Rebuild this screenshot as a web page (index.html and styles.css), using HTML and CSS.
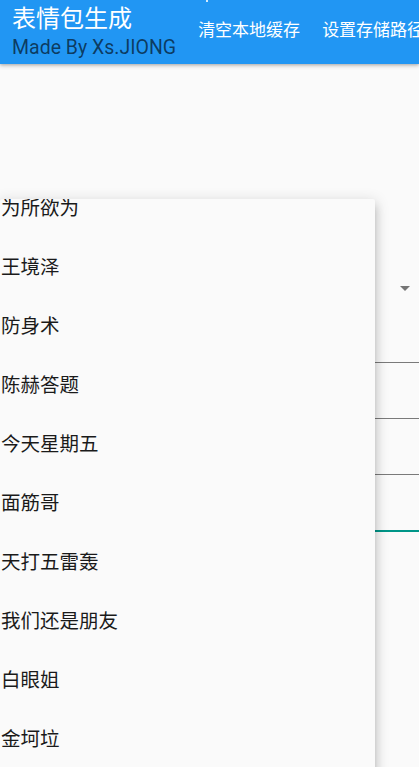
FILE: index.html
```html
<!DOCTYPE html>
<html lang="zh-CN">
<head>
<meta charset="utf-8">
<title>表情包生成</title>
<link rel="stylesheet" href="styles.css">
</head>
<body>
<div class="page">
  <header class="appbar">
    <span class="status-dot"></span>
    <div class="titles">
      <div class="title">表情包生成</div>
      <div class="subtitle">Made By Xs.JIONG</div>
    </div>
    <div class="actions">
      <span class="action">清空本地缓存</span>
      <span class="action">设置存储路径</span>
    </div>
  </header>
  <main class="form">
    <div class="dropdown">
      <svg class="arrow" width="10" height="5" viewBox="0 0 10 5"><path d="M0 0H10L5 5Z" fill="#757575"/></svg>
    </div>
    <div class="field f1"></div>
    <div class="field"></div>
    <div class="field"></div>
    <div class="field focused"></div>
  </main>
  <div class="menu">
    <ul class="menu-list">
      <li>为所欲为</li>
      <li>王境泽</li>
      <li>防身术</li>
      <li>陈赫答题</li>
      <li>今天星期五</li>
      <li>面筋哥</li>
      <li>天打五雷轰</li>
      <li>我们还是朋友</li>
      <li>白眼姐</li>
      <li>金坷垃</li>
      <li>凉凉</li>
    </ul>
  </div>
</div>
</body>
</html>
```
FILE: styles.css
```css
html, body {
  margin: 0;
  padding: 0;
  background: #fafafa;
}
body {
  font-family: Roboto, "Noto Sans CJK SC", sans-serif;
  width: 419px;
  height: 767px;
  overflow: hidden;
}
.page {
  position: relative;
  width: 419px;
  height: 767px;
  overflow: hidden;
  background: #fafafa;
}
.appbar {
  position: relative;
  z-index: 2;
  height: 64px;
  background: #2196f3;
  display: flex;
  align-items: flex-start;
  box-shadow: 0 2px 4px rgba(0,0,0,0.2), 0 1px 2px rgba(0,0,0,0.12);
  white-space: nowrap;
}
.status-dot {
  position: absolute;
  left: 206px;
  top: 0;
  width: 2px;
  height: 2px;
  background: rgba(255,255,255,0.8);
}
.titles {
  padding-left: 12px;
  display: flex;
  flex-direction: column;
  flex: none;
}
.title {
  font-family: "Noto Sans CJK SC", sans-serif;
  color: #fff;
  font-size: 24px;
  line-height: 26px;
  margin-top: 4px;
}
.subtitle {
  font-family: Roboto, sans-serif;
  color: rgba(0,0,0,0.62);
  font-size: 19.5px;
  line-height: 24px;
  margin-top: 6px;
}
.actions {
  display: flex;
  gap: 22px;
  margin-left: 22px;
  margin-top: 18px;
  flex: none;
}
.action {
  font-family: "Noto Sans CJK SC", sans-serif;
  color: #fff;
  font-size: 17px;
  line-height: 22px;
}
.form {
  padding-top: 200px;
}
.dropdown {
  height: 48px;
  display: flex;
  align-items: center;
  justify-content: flex-end;
  padding-right: 9px;
}
.arrow {
  display: block;
}
.field {
  height: 55px;
  margin-left: 16px;
  border-bottom: 1px solid #7a7a7a;
}
.field.f1 {
  height: 50px;
}
.field.focused {
  border-bottom: 2px solid #009688;
}
.menu {
  position: absolute;
  z-index: 3;
  left: 0;
  top: 199px;
  width: 375px;
  height: 600px;
  background: #fafafa;
  border-radius: 2px;
  overflow: hidden;
  box-shadow: 0 8px 10px 1px rgba(0,0,0,0.14), 0 3px 14px 2px rgba(0,0,0,0.12), 0 5px 5px -3px rgba(0,0,0,0.2);
}
.menu-list {
  list-style: none;
  margin: -22px 0 0 0;
  padding: 0;
}
.menu-list li {
  height: 59px;
  display: flex;
  align-items: center;
  padding-left: 1px;
  font-family: "Noto Sans CJK SC", sans-serif;
  font-size: 19.5px;
  color: #1a1a1a;
}
```
